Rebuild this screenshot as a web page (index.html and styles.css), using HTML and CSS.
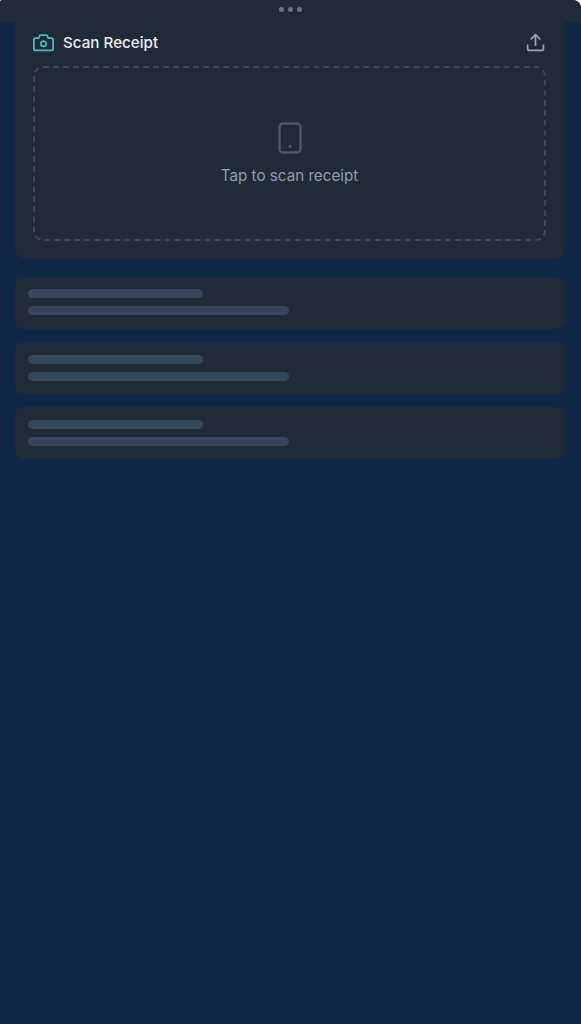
FILE: index.html
```html
<!DOCTYPE html>
<html lang="en">

<head>
    <meta charset="UTF-8">
    <meta name="viewport" content="width=device-width, initial-scale=1.0">
    <title>Scan Receipt</title>
    <link rel="stylesheet" href="styles.css">
</head>

<body>
    <div class="handle-bar">
        <span class="dot"></span>
        <span class="dot"></span>
        <span class="dot"></span>
    </div>
    <div class="content">
        <div class="scan-card">
            <div class="scan-header">
                <div class="scan-title">
                    <svg class="camera-icon" viewBox="0 0 24 24" fill="none" stroke="currentColor" stroke-width="2" stroke-linecap="round" stroke-linejoin="round">
                        <path d="M3 7h3.500L8 3.500h8L17.500 7H21a2 2 0 0 1 2 2v10a2 2 0 0 1-2 2H3a2 2 0 0 1-2-2V9a2 2 0 0 1 2-2z"></path>
                        <circle cx="12" cy="13.500" r="3"></circle>
                    </svg>
                    <span>Scan Receipt</span>
                </div>
                <svg class="upload-icon" viewBox="0 0 24 24" fill="none" stroke="currentColor" stroke-width="2" stroke-linecap="round" stroke-linejoin="round">
                    <path d="M12 15V3"></path>
                    <path d="M7 8l5-5 5 5"></path>
                    <path d="M3 15v4a2 2 0 0 0 2 2h14a2 2 0 0 0 2-2v-4"></path>
                </svg>
            </div>
            <div class="drop-zone">
                <svg class="phone-icon" viewBox="0 0 24 32" fill="none" stroke="currentColor" stroke-width="2.500">
                    <rect x="1.500" y="1.500" width="21" height="29" rx="3.500"></rect>
                    <circle cx="12" cy="24.500" r="1.700" fill="currentColor" stroke="none"></circle>
                </svg>
                <div class="drop-text">Tap to scan receipt</div>
            </div>
        </div>
        <div class="skeleton-list">
            <div class="skeleton-row">
                <div class="line short"></div>
                <div class="line long"></div>
            </div>
            <div class="skeleton-row">
                <div class="line short"></div>
                <div class="line long"></div>
            </div>
            <div class="skeleton-row">
                <div class="line short"></div>
                <div class="line long"></div>
            </div>
        </div>
    </div>
</body>

</html>
```

FILE: styles.css
```css
* {
    margin: 0;
    padding: 0;
    box-sizing: border-box;
}

html {
    background-color: #ffffff;
}

body {
    height: 1024px;
    background-color: #112747;
    border-radius: 2px 8px 0 0;
    font-family: Inter, "Liberation Sans", sans-serif;
}

.handle-bar {
    height: 22px;
    display: flex;
    justify-content: center;
    gap: 4px;
    padding-top: 7px;
    padding-right: 1px;
    background-color: #212b38;
    border-radius: 2px 8px 0 0;
}

.dot {
    width: 5px;
    height: 5px;
    border-radius: 50%;
    background-color: #6b7280;
}

.content {
    padding: 0 17px 0 15px;
}

.scan-card {
    height: 237px;
    padding: 0 18px;
    background-color: #212b38;
    border-radius: 0 0 10px 10px;
}

.scan-header {
    height: 44px;
    display: flex;
    align-items: center;
    justify-content: space-between;
    padding-bottom: 4px;
}

.scan-title {
    display: flex;
    align-items: center;
    gap: 9px;
    font-size: 15.2px;
    font-weight: 500;
    color: #eceef1;
}

.camera-icon {
    width: 21px;
    height: 21px;
    color: #4fb8bf;
}

.upload-icon {
    width: 21px;
    height: 21px;
    color: #9ca3af;
}

.drop-zone {
    height: 175px;
    display: flex;
    flex-direction: column;
    align-items: center;
    padding-top: 54px;
    border: 2px dashed #3d4653;
    border-radius: 10px;
}

.phone-icon {
    width: 24px;
    height: 32px;
    color: #4b5563;
}

.drop-text {
    margin-top: 12px;
    font-size: 15.2px;
    color: #929dae;
}

.skeleton-list {
    display: flex;
    flex-direction: column;
    gap: 13.400px;
    margin-top: 17.600px;
}

.skeleton-row {
    height: 52px;
    padding: 12.600px 12px 0 13px;
    background-color: #212b38;
    border-radius: 8px;
}

.line {
    height: 9px;
    border-radius: 5px;
    background-color: #374658;
}

.short {
    width: 175px;
    margin-bottom: 8px;
}

.long {
    width: 261px;
}
```
